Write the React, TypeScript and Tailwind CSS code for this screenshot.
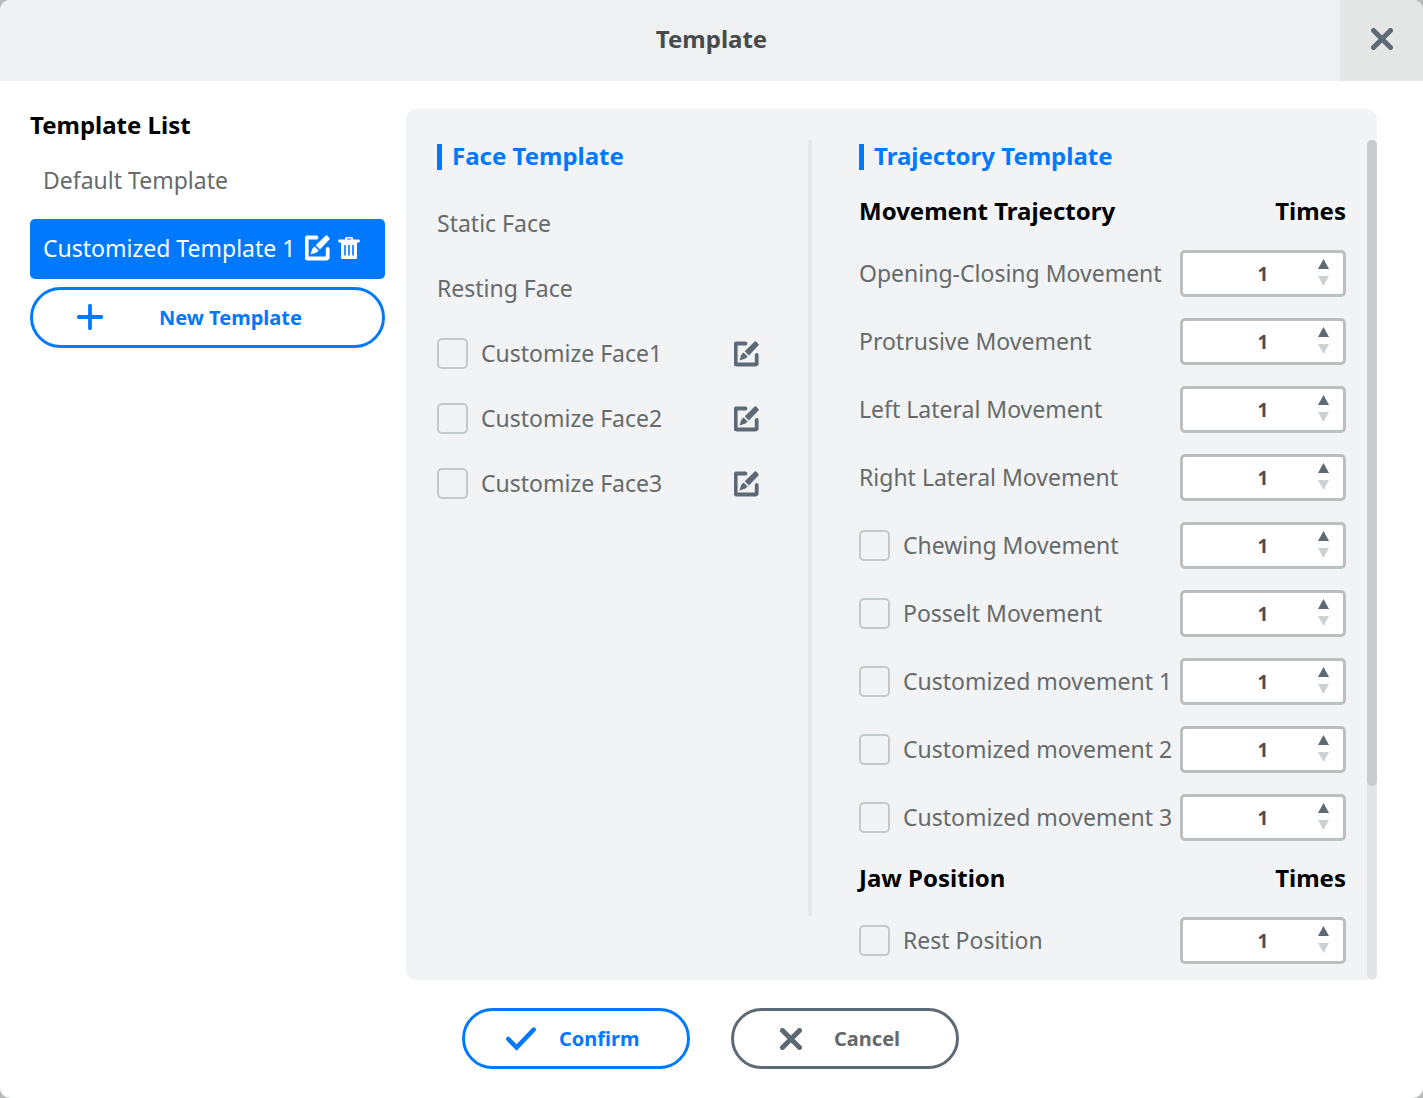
import React, { FC, useState } from 'react'

type IconProps = {
  className?: string
}

type Item = {
  id: string
  label: string
  optional?: boolean
}

const faces: Item[] = [
  { id: 'static', label: 'Static Face' },
  { id: 'resting', label: 'Resting Face' },
  { id: 'face1', label: 'Customize Face1', optional: true },
  { id: 'face2', label: 'Customize Face2', optional: true },
  { id: 'face3', label: 'Customize Face3', optional: true }
]

const movements: Item[] = [
  { id: 'opening', label: 'Opening-Closing Movement' },
  { id: 'protrusive', label: 'Protrusive Movement' },
  { id: 'left', label: 'Left Lateral Movement' },
  { id: 'right', label: 'Right Lateral Movement' },
  { id: 'chewing', label: 'Chewing Movement', optional: true },
  { id: 'posselt', label: 'Posselt Movement', optional: true },
  { id: 'custom1', label: 'Customized movement 1', optional: true },
  { id: 'custom2', label: 'Customized movement 2', optional: true },
  { id: 'custom3', label: 'Customized movement 3', optional: true }
]

const jawPositions: Item[] = [
  { id: 'rest', label: 'Rest Position', optional: true }
]

const EditIcon: FC<IconProps> = ({ className }) => (
  <svg viewBox="0 0 26 26" className={className} aria-hidden="true">
    <path
      d="M11.500 2.500H2.500a.8.8 0 0 0-.8.8v19.400a.8.8 0 0 0 .8.8h19.400a.8.8 0 0 0 .8-.8V14"
      fill="none"
      stroke="currentColor"
      strokeWidth="3.800"
      strokeLinecap="round"
    />
    <path
      d="M20.700.6a1 1 0 0 1 1.500 0l2.200 2.400a1 1 0 0 1 0 1.500L14.900 14.400 10.700 10.300zM9.600 11.400l4.100 4.100-2.200 1.900-6 2 1.800-5.600z"
      fill="currentColor"
    />
  </svg>
)

const TrashIcon: FC<IconProps> = ({ className }) => (
  <svg viewBox="0 0 22 22" className={className} aria-hidden="true">
    <path
      fill="currentColor"
      fillRule="evenodd"
      d="M7 2.500V1.200Q7 0 8.200 0h5.600Q15 0 15 1.200V2.500h6q.7 0 .7.7v1.600q0 .7-.7.700H19V21q0 1-1 1H4q-1 0-1-1V5.500H1q-.7 0-.7-.7V3.200q0-.7.700-.700zM9 1.500v1h4v-1zM6.200 8v10.500h1.600V8zm4 0v10.500h1.600V8zm4 0v10.500h1.600V8z"
    />
  </svg>
)

const CrossIcon: FC<IconProps> = ({ className }) => (
  <svg viewBox="0 0 22 22" className={className} aria-hidden="true">
    <path
      d="M2.500 2.500l17 17M19.500 2.500l-17 17"
      stroke="currentColor"
      strokeWidth="5"
      strokeLinecap="round"
    />
  </svg>
)

const CheckIcon: FC<IconProps> = ({ className }) => (
  <svg viewBox="0 0 30 24" className={className} aria-hidden="true">
    <path
      d="M2.300 12l8.300 8.500L27.700 2.600"
      fill="none"
      stroke="currentColor"
      strokeWidth="4.500"
      strokeLinecap="round"
    />
  </svg>
)

const PlusIcon: FC<IconProps> = ({ className }) => (
  <svg viewBox="0 0 26 26" className={className} aria-hidden="true">
    <path
      d="M13 1.800v22.400M1.800 13h22.400"
      stroke="currentColor"
      strokeWidth="3.800"
      strokeLinecap="round"
    />
  </svg>
)

const SectionTitle: FC<{ text: string }> = ({ text }) => (
  <h2 className="flex h-[34px] items-center gap-[10px] text-[24px] font-bold text-[#0079fe]">
    <span className="h-[26px] w-[5px] bg-[#0079fe]" />
    <span className="pb-0.5">{text}</span>
  </h2>
)

const ItemLabel: FC<{ item: Item }> = ({ item }) => {
  if (!item.optional) {
    return <span className="pb-0.5 whitespace-nowrap">{item.label}</span>
  }
  return (
    <label className="flex items-center gap-[13px] whitespace-nowrap">
      <input
        type="checkbox"
        className="size-[31px] shrink-0 appearance-none rounded-[5px] border-2 border-[#c4caca] checked:border-[#0079fe] checked:bg-[#0079fe]"
      />
      <span className="pb-0.5">{item.label}</span>
    </label>
  )
}

const TimesInput: FC<{ label: string }> = ({ label }) => {
  const [value, setValue] = useState(1)

  return (
    <div className="grid h-[47px] w-[166px] shrink-0 grid-cols-[34px_1fr_34px] items-center rounded-[5px] border-3 border-[#bcbfbf] bg-white">
      <input
        type="text"
        inputMode="numeric"
        aria-label={`${label} times`}
        value={value}
        onChange={(e) => setValue(Math.max(1, Number(e.target.value) || 1))}
        className="col-start-2 w-full min-w-0 text-center text-[19px] font-bold text-[#4b4f52] outline-none"
      />
      <div className="flex flex-col items-center gap-[7px] pr-[5px] pb-0.5">
        <button
          type="button"
          aria-label="Increase"
          onClick={() => setValue(value + 1)}
          className="text-[#5d6974]"
        >
          <svg viewBox="0 0 11 10" className="h-[10px] w-[11px]">
            <path d="M5.500 0l5.500 10H0z" fill="currentColor" />
          </svg>
        </button>
        <button
          type="button"
          aria-label="Decrease"
          disabled={value <= 1}
          onClick={() => setValue(value - 1)}
          className="text-[#5d6974] disabled:text-[#cdd1d4]"
        >
          <svg viewBox="0 0 11 10" className="h-[10px] w-[11px]">
            <path d="M0 0h11L5.500 10z" fill="currentColor" />
          </svg>
        </button>
      </div>
    </div>
  )
}

const TimesGroup: FC<{ title: string; items: Item[] }> = ({ title, items }) => (
  <div>
    <h3 className="flex h-[76px] items-center justify-between pb-0.5 text-[24px] font-bold text-black">
      <span>{title}</span>
      <span>Times</span>
    </h3>
    <ul className="flex flex-col gap-[21px]">
      {items.map((item) => (
        <li key={item.id} className="flex items-center justify-between">
          <ItemLabel item={item} />
          <TimesInput label={item.label} />
        </li>
      ))}
    </ul>
  </div>
)

const App: FC = () => {
  return (
    <div className="min-h-screen bg-[#b8babb] font-['Noto_Sans',sans-serif] text-[23px] leading-[34px] text-[#666a6a]">
      <div className="flex min-h-screen flex-col overflow-hidden rounded-[10px] bg-white">
        <header className="flex h-[81px] items-stretch bg-[#eff0f2]">
          <h1 className="flex flex-1 items-center justify-center pb-1 pl-[83px] text-[24px] font-bold text-[#474b4b]">
            Template
          </h1>
          <button
            type="button"
            aria-label="Close"
            className="flex w-[83px] items-center justify-center bg-[#e5e7e6] pb-1 text-[#5d6974]"
          >
            <CrossIcon className="size-[22px]" />
          </button>
        </header>

        <main className="flex gap-[21px] pt-7 pr-[46px] pl-[30px]">
          <aside className="flex w-[355px] shrink-0 flex-col gap-2">
            <h2 className="h-[34px] text-[24px] leading-8 font-bold text-black">
              Template List
            </h2>
            <button
              type="button"
              className="flex h-[60px] items-center px-[13px] pb-0.5"
            >
              Default Template
            </button>
            <div className="flex h-[60px] items-center rounded-[5px] bg-[#0079fe] px-[13px] pb-0.5 text-white">
              <span className="w-[262px] whitespace-nowrap">
                Customized Template 1
              </span>
              <button type="button" aria-label="Edit template">
                <EditIcon className="size-[26px]" />
              </button>
              <button
                type="button"
                aria-label="Delete template"
                className="ml-[7px]"
              >
                <TrashIcon className="size-[22px]" />
              </button>
            </div>
            <button
              type="button"
              className="flex h-[61px] items-center rounded-full border-3 border-[#0079fe] px-11 text-[20px] font-bold text-[#0079fe]"
            >
              <PlusIcon className="mb-0.5 size-[26px]" />
              <span className="ml-14">New Template</span>
            </button>
          </aside>

          <div className="flex min-w-0 flex-1 rounded-[10px] bg-[#f1f3f5] pt-[31px] pl-[31px]">
            <section className="w-[371px] shrink-0 pr-12">
              <SectionTitle text="Face Template" />
              <ul className="mt-[17px]">
                {faces.map((face) => (
                  <li
                    key={face.id}
                    className="flex h-[65px] items-center justify-between"
                  >
                    <ItemLabel item={face} />
                    {face.optional && (
                      <button
                        type="button"
                        aria-label={`Edit ${face.label}`}
                        className="text-[#5d6974]"
                      >
                        <EditIcon className="size-[26px]" />
                      </button>
                    )}
                  </li>
                ))}
              </ul>
            </section>
            <div className="mb-16 w-1 shrink-0 bg-[#e5e7e9]" />
            <section className="min-w-0 flex-1 pr-[21px] pb-4 pl-[47px]">
              <SectionTitle text="Trajectory Template" />
              <TimesGroup title="Movement Trajectory" items={movements} />
              <TimesGroup title="Jaw Position" items={jawPositions} />
            </section>
            <div className="w-[10px] shrink-0 rounded-full bg-[#e3e4e6]">
              <div className="h-10/13 rounded-full bg-[#c8cbd0]" />
            </div>
          </div>
        </main>

        <footer className="flex justify-center gap-[41px] pt-7 pr-0.5 pb-[29px] text-[20px] font-bold">
          <button
            type="button"
            className="flex h-[61px] w-[228px] items-center rounded-full border-3 border-[#0079fe] pl-[41px] text-[#0079fe]"
          >
            <CheckIcon className="h-6 w-[30px]" />
            <span className="ml-[23px]">Confirm</span>
          </button>
          <button
            type="button"
            className="flex h-[61px] w-[228px] items-center rounded-full border-3 border-[#5d6974] pl-[46px] text-[#666a6a]"
          >
            <CrossIcon className="size-[22px] text-[#5d6974]" />
            <span className="ml-8">Cancel</span>
          </button>
        </footer>
      </div>
    </div>
  )
}

export default App
